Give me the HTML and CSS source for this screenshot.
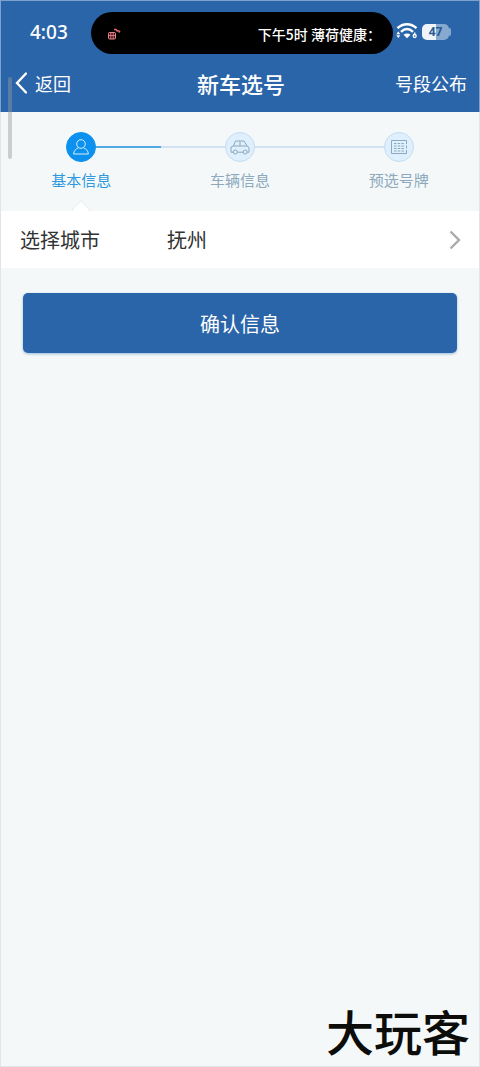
FILE: index.html
```html
<!DOCTYPE html>
<html lang="zh-CN">
<head>
<meta charset="utf-8">
<meta name="viewport" content="width=device-width, initial-scale=1">
<title>新车选号</title>
<link rel="stylesheet" href="styles.css">
</head>
<body>
<div class="page">
  <header class="header">
    <div class="status">
      <span class="clock">4:03</span>
      <div class="island">
        <svg class="island-icon" viewBox="0 0 14 12" aria-hidden="true">
          <rect x="1.500" y="4.500" width="7" height="6.500" rx="1" fill="#3d1519" stroke="#e8868f"/>
          <path d="M1.500 7.500h7M3.800 4.500V11M6.200 4.500V11" stroke="#e8868f" stroke-width=".8"/>
          <path d="M7 1.500h2L10.500 3.500M10 2.500l2.500.8-.8 1.200" fill="none" stroke="#e8686f" stroke-width="1.400"/>
        </svg>
        <span>下午5时 薄荷健康：</span>
      </div>
      <svg class="wifi" viewBox="0 0 22 18" aria-hidden="true">
        <g fill="none" stroke="#fff" stroke-width="2.400">
          <path d="M1.500 6.200C7 .9 15 .9 20.500 6.200"/>
          <path d="M5 9.800c3.800-3.500 8.200-3.500 12 0"/>
        </g>
        <path d="M7.500 12.800c2-1.800 5-1.800 7 0L11 16.200z" fill="#fff"/>
        <path d="M.3 12.200l2-2.700 2 2.700zM.3 13.300h4l-2 2.700z" fill="#fff"/>
        <path d="M19.200 10.500l-1.700 2.800" stroke="#fff" stroke-width="1.300"/>
        <circle cx="18.700" cy="14" r="1.500" fill="none" stroke="#fff" stroke-width="1.300"/>
      </svg>
      <span class="battery">47</span>
      <span class="battery-tip"></span>
    </div>
    <nav class="nav">
      <button class="nav-button back" type="button">
        <svg class="back-icon" viewBox="0 0 12 22" aria-hidden="true"><path d="M11 1.500L2 11l9 9.500" fill="none" stroke="currentColor" stroke-width="2.400" stroke-linecap="round"/></svg>
        返回
      </button>
      <h1 class="title">新车选号</h1>
      <button class="nav-button publish" type="button">号段公布</button>
    </nav>
  </header>
  <main class="main">
    <ol class="steps">
      <li class="step active">
        <span class="track"><span class="disc">
          <svg class="step-icon" viewBox="0 0 20 20" aria-hidden="true"><g fill="none" stroke="currentColor"><circle cx="10" cy="7" r="4.300"/><path d="M7.500 10.800C4.500 12 3 13.800 2.600 17h14.800c-.4-3.200-1.900-5-4.900-6.200"/></g></svg>
        </span></span>
        <span>基本信息</span>
      </li>
      <li class="step">
        <span class="track"><span class="disc">
          <svg class="step-icon" viewBox="0 0 20 20" aria-hidden="true"><g fill="none" stroke="currentColor"><path d="M3.300 15.200H1V10l2.500-1 2-5h8.500L17 9l2 1.500v4.700h-1.800M7.300 15.200h6M3.500 9H17M10 4V9"/><circle cx="5.300" cy="15" r="2"/><circle cx="15.200" cy="15" r="2"/></g></svg>
        </span></span>
        <span>车辆信息</span>
      </li>
      <li class="step">
        <span class="track"><span class="disc">
          <svg class="step-icon" viewBox="0 0 20 20" aria-hidden="true"><g fill="none" stroke="currentColor"><path d="M17.500 7V3.500h-15v13h15V13M17.500 8.500v3"/><path d="M5 6.500h10M5 9h10M5 11.500h10M5 14h10" stroke-dasharray="2.500 1.200"/></g></svg>
        </span></span>
        <span>预选号牌</span>
      </li>
    </ol>
    <button class="city" type="button">
      <span class="city-label">选择城市</span>
      <span class="city-value">抚州</span>
      <svg class="chevron" viewBox="0 0 12 20" aria-hidden="true"><path d="M1.500 1.500L10 10l-8.500 8.500" fill="none" stroke="currentColor" stroke-width="2.400"/></svg>
    </button>
    <button class="confirm" type="button">确认信息</button>
  </main>
  <footer class="brand">大玩客</footer>
  <span class="scrollbar"></span>
</div>
</body>
</html>
```
FILE: styles.css
```css
* { box-sizing: border-box; }
body {
  margin: 0;
  font-family: "Noto Sans CJK SC", sans-serif;
  color: #333;
}
button {
  margin: 0;
  padding: 0;
  border: 0;
  background: none;
  font: inherit;
  color: inherit;
  cursor: pointer;
}
.page {
  position: relative;
  display: flex;
  flex-direction: column;
  min-height: 100vh;
  border: 1px solid #dfe5e9;
  background: #f4f8f9;
}
.header {
  margin: -1px -1px 0;
  border: 1px solid #7da2cd;
  border-bottom: 0;
  background: #2b65a9;
  color: #fff;
}
.status {
  display: flex;
  align-items: center;
  padding: 11px 28px 0 29px;
}
.clock {
  width: 61px;
  padding-bottom: 3px;
  font: 500 19px/24px "Noto Sans", sans-serif;
}
.island {
  flex: 1;
  display: flex;
  align-items: center;
  justify-content: space-between;
  height: 42px;
  padding: 2px 12px 0 16px;
  border-radius: 21px;
  background: #000;
  font-size: 14px;
  font-weight: 500;
  white-space: nowrap;
}
.island-icon { width: 14px; height: 12px; }
.wifi {
  width: 22px;
  height: 18px;
  margin: 0 4px 4px 3px;
}
.battery {
  width: 27px;
  height: 16px;
  margin-bottom: 3px;
  border-radius: 5px;
  background: linear-gradient(90deg, #eef4fa 50%, #87a9d0 50%);
  color: #2b5b94;
  font: bold 12px/16px "Open Sans", sans-serif;
  text-align: center;
}
.battery-tip {
  width: 2px;
  height: 8px;
  margin-bottom: 3px;
  border-radius: 0 2px 2px 0;
  background: #87a9d0;
}
.nav {
  display: grid;
  grid-template-columns: 1fr auto 1fr;
  align-items: center;
  height: 58px;
  padding: 0 12px 0 14px;
}
.nav-button { font-size: 18px; line-height: 28px; }
.back {
  justify-self: start;
  display: flex;
  align-items: center;
  gap: 8px;
}
.back-icon { width: 12px; height: 22px; }
.publish { justify-self: end; }
.title {
  margin: 0;
  font-size: 22px;
  line-height: 32px;
  font-weight: 500;
}
.steps {
  display: grid;
  grid-template-columns: repeat(3, 1fr);
  margin: 0;
  padding: 20px 1px 20px;
  list-style: none;
}
.step {
  position: relative;
  display: flex;
  flex-direction: column;
  gap: 7px;
  text-align: center;
  font-size: 15px;
  line-height: 22px;
  color: #8ca9bd;
}
.track {
  display: flex;
  align-items: center;
}
.track::before,
.track::after {
  content: "";
  flex: 1;
  height: 2px;
  background: #d1e3f3;
}
.step:first-child .track::before,
.step:last-child .track::after { background: none; }
.disc {
  display: flex;
  align-items: center;
  justify-content: center;
  width: 30px;
  height: 30px;
  border: 1px solid #c5dcef;
  border-radius: 50%;
  background: #deeffd;
}
.step-icon { width: 20px; height: 20px; }
.active { color: #2e99dd; }
.active .track::after { background: #4fa9e2; }
.active .disc {
  border-color: #0c91ef;
  background: #0c91ef;
  color: #d4edff;
}
.active::after {
  content: "";
  position: absolute;
  left: 50%;
  bottom: -26px;
  width: 12px;
  height: 12px;
  border: 1px solid #e8eef2;
  background: #fff;
  transform: translateX(-50%) rotate(45deg);
}
.city {
  position: relative;
  display: flex;
  align-items: center;
  width: 100%;
  height: 57px;
  padding: 0 18px 0 19px;
  background: #fff;
  font-size: 20px;
  line-height: 28px;
  text-align: left;
}
.city-label { width: 147px; }
.city-value { flex: 1; }
.chevron {
  width: 12px;
  height: 20px;
  color: #aaa;
}
.confirm {
  display: block;
  width: calc(100% - 44px);
  height: 60px;
  margin: 25px 22px;
  border-radius: 5px;
  background: #2b65a9;
  box-shadow: 0 1px 3px #9db9d8;
  color: #fff;
  font-size: 20px;
}
.brand {
  margin-top: auto;
  padding: 0 9px 8px;
  color: #0c0d0a;
  font-size: 48px;
  line-height: 56px;
  font-weight: 500;
  text-align: right;
}
.scrollbar {
  position: absolute;
  left: 7px;
  top: 76px;
  width: 4px;
  height: 82px;
  border-radius: 2px;
  background: rgba(150, 155, 155, .45);
}
```
